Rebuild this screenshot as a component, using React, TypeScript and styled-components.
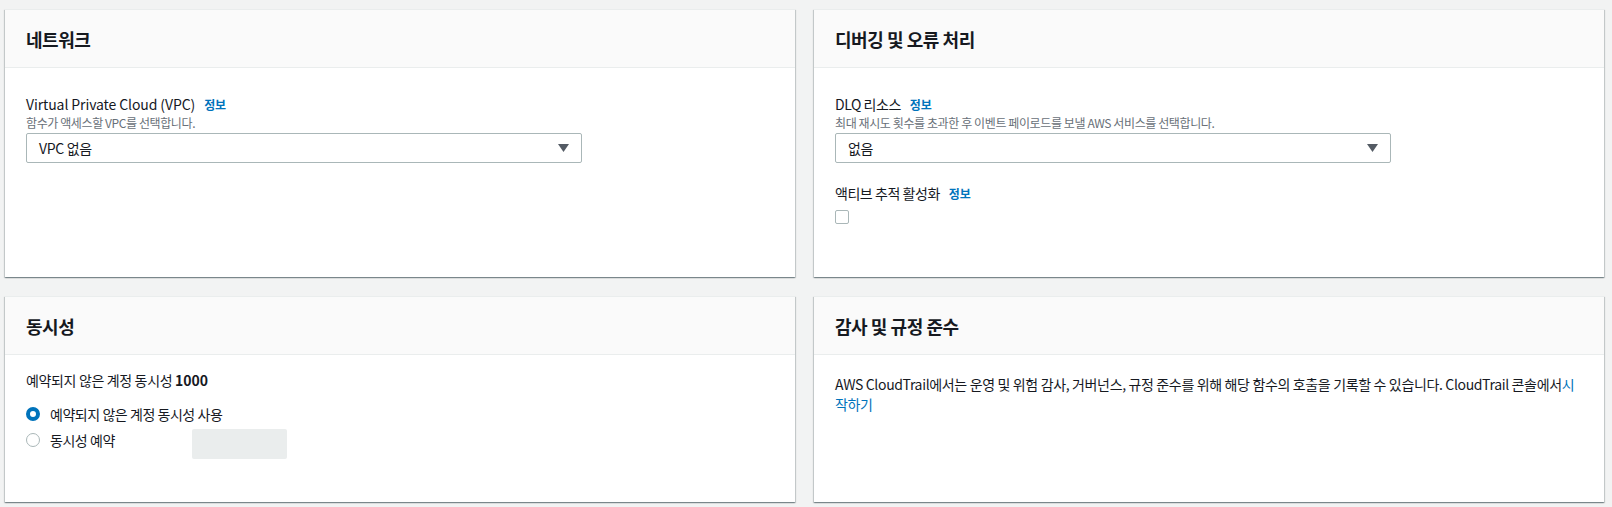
import React from "react";
import styled, { createGlobalStyle } from "styled-components";

const GlobalStyle = createGlobalStyle`
  html, body {
    margin: 0;
    padding: 0;
    background: #f2f3f3;
  }
  body {
    font-family: "Noto Sans CJK KR", "Noto Sans", sans-serif;
    color: #16191f;
    font-size: 14px;
  }
`;

const Page = styled.div`
  display: grid;
  grid-template-columns: 1fr 1fr;
  grid-template-rows: 268px 206px;
  column-gap: 19px;
  row-gap: 19px;
  padding: 9px 8px 5px 5px;
  box-sizing: border-box;
  width: 1612px;
  height: 507px;
`;

const Card = styled.section`
  background: #fff;
  border-top: 1px solid #eaeded;
  box-shadow: 0 1px 1px 0 rgba(0, 28, 36, 0.3), 1px 1px 1px 0 rgba(0, 28, 36, 0.15),
    -1px 1px 1px 0 rgba(0, 28, 36, 0.15);
  display: flex;
  flex-direction: column;
  min-width: 0;
`;

const CardHeader = styled.header`
  height: 58px;
  box-sizing: border-box;
  background: #fafafa;
  border-bottom: 1px solid #eaeded;
  display: flex;
  align-items: center;
  padding: 0 21px;
`;

const Title = styled.h2`
  margin: 0;
  font-size: 18px;
  font-weight: 700;
  line-height: 22px;
  letter-spacing: -0.45px;
  color: #16191f;
`;

const CardBody = styled.div<{ $top: number }>`
  padding: ${(p) => p.$top}px 21px 20px;
  display: flex;
  flex-direction: column;
`;

const Field = styled.div<{ $gap?: number }>`
  display: flex;
  flex-direction: column;
  margin-bottom: ${(p) => p.$gap ?? 0}px;
`;

const Label = styled.div<{ $tight?: boolean }>`
  font-size: 14px;
  line-height: 20px;
  color: #16191f;
  display: flex;
  align-items: baseline;
  letter-spacing: ${(p) => (p.$tight ? "-0.45px" : "-0.1px")};
`;

const Info = styled.a`
  font-size: 12px;
  font-weight: 700;
  color: #0073bb;
  margin-left: 9px;
  letter-spacing: -0.2px;
  text-decoration: none;
`;

const Desc = styled.div`
  font-size: 12px;
  line-height: 16px;
  color: #687078;
  letter-spacing: -0.4px;
  margin-bottom: 2px;
`;

const Select = styled.div`
  width: 556px;
  height: 30px;
  box-sizing: border-box;
  border: 1px solid #aab7b8;
  border-radius: 2px;
  display: flex;
  align-items: center;
  justify-content: space-between;
  padding: 0 12px 0 12px;
  font-size: 14px;
  letter-spacing: -0.3px;
  color: #16191f;
`;

const Caret = styled.svg`
  width: 11px;
  height: 8px;
  fill: #545b64;
`;

const Checkbox = styled.span`
  display: block;
  width: 14px;
  height: 14px;
  box-sizing: border-box;
  border: 1px solid #aab7b8;
  border-radius: 2px;
  margin-top: 6px;
`;

const Text = styled.p`
  margin: 0;
  font-size: 14px;
  line-height: 20px;
  letter-spacing: -0.35px;
  color: #16191f;
`;

const Strong = styled.b`
  font-weight: 700;
  letter-spacing: 0;
`;

const Link = styled.a`
  color: #0073bb;
  text-decoration: none;
`;

const RadioGroup = styled.div`
  display: flex;
  flex-direction: column;
  margin-top: 11px;
`;

const RadioRow = styled.label`
  display: grid;
  grid-template-columns: 24px 142px 95px;
  grid-template-rows: 26px;
  align-items: center;
  font-size: 14px;
  letter-spacing: -0.45px;
  white-space: nowrap;
`;

const Radio = styled.span<{ $checked?: boolean }>`
  width: 14px;
  height: 14px;
  box-sizing: border-box;
  border-radius: 50%;
  border: ${(p) => (p.$checked ? "4px solid #0073bb" : "1px solid #aab7b8")};
  background: #fff;
`;

const ReserveInput = styled.span`
  align-self: start;
  width: 95px;
  height: 30px;
  background: #eaeded;
  border-radius: 2px;
  margin-top: 2px;
`;

function DropCaret() {
  return (
    <Caret viewBox="0 0 11 8">
      <path d="M0 0h11L5.5 8z" />
    </Caret>
  );
}

export default function App() {
  return (
    <>
      <GlobalStyle />
      <Page>
        <Card>
          <CardHeader>
            <Title>네트워크</Title>
          </CardHeader>
          <CardBody $top={26}>
            <Field>
              <Label>
                Virtual Private Cloud (VPC)<Info>정보</Info>
              </Label>
              <Desc>함수가 액세스할 VPC를 선택합니다.</Desc>
              <Select>
                VPC 없음
                <DropCaret />
              </Select>
            </Field>
          </CardBody>
        </Card>
        <Card>
          <CardHeader>
            <Title>디버깅 및 오류 처리</Title>
          </CardHeader>
          <CardBody $top={26}>
            <Field $gap={20}>
              <Label $tight>
                DLQ 리소스<Info>정보</Info>
              </Label>
              <Desc>최대 재시도 횟수를 초과한 후 이벤트 페이로드를 보낼 AWS 서비스를 선택합니다.</Desc>
              <Select>
                없음
                <DropCaret />
              </Select>
            </Field>
            <Field>
              <Label $tight>
                액티브 추적 활성화<Info>정보</Info>
              </Label>
              <Checkbox />
            </Field>
          </CardBody>
        </Card>
        <Card>
          <CardHeader>
            <Title>동시성</Title>
          </CardHeader>
          <CardBody $top={15}>
            <Text>
              예약되지 않은 계정 동시성 <Strong>1000</Strong>
            </Text>
            <RadioGroup>
              <RadioRow>
                <Radio $checked />
                예약되지 않은 계정 동시성 사용
              </RadioRow>
              <RadioRow>
                <Radio />
                동시성 예약
                <ReserveInput />
              </RadioRow>
            </RadioGroup>
          </CardBody>
        </Card>
        <Card>
          <CardHeader>
            <Title>감사 및 규정 준수</Title>
          </CardHeader>
          <CardBody $top={19}>
            <Text>
              AWS CloudTrail에서는 운영 및 위험 감사, 거버넌스, 규정 준수를 위해 해당 함수의 호출을 기록할 수
              있습니다. CloudTrail 콘솔에서<Link>시작하기</Link>
            </Text>
          </CardBody>
        </Card>
      </Page>
    </>
  );
}
